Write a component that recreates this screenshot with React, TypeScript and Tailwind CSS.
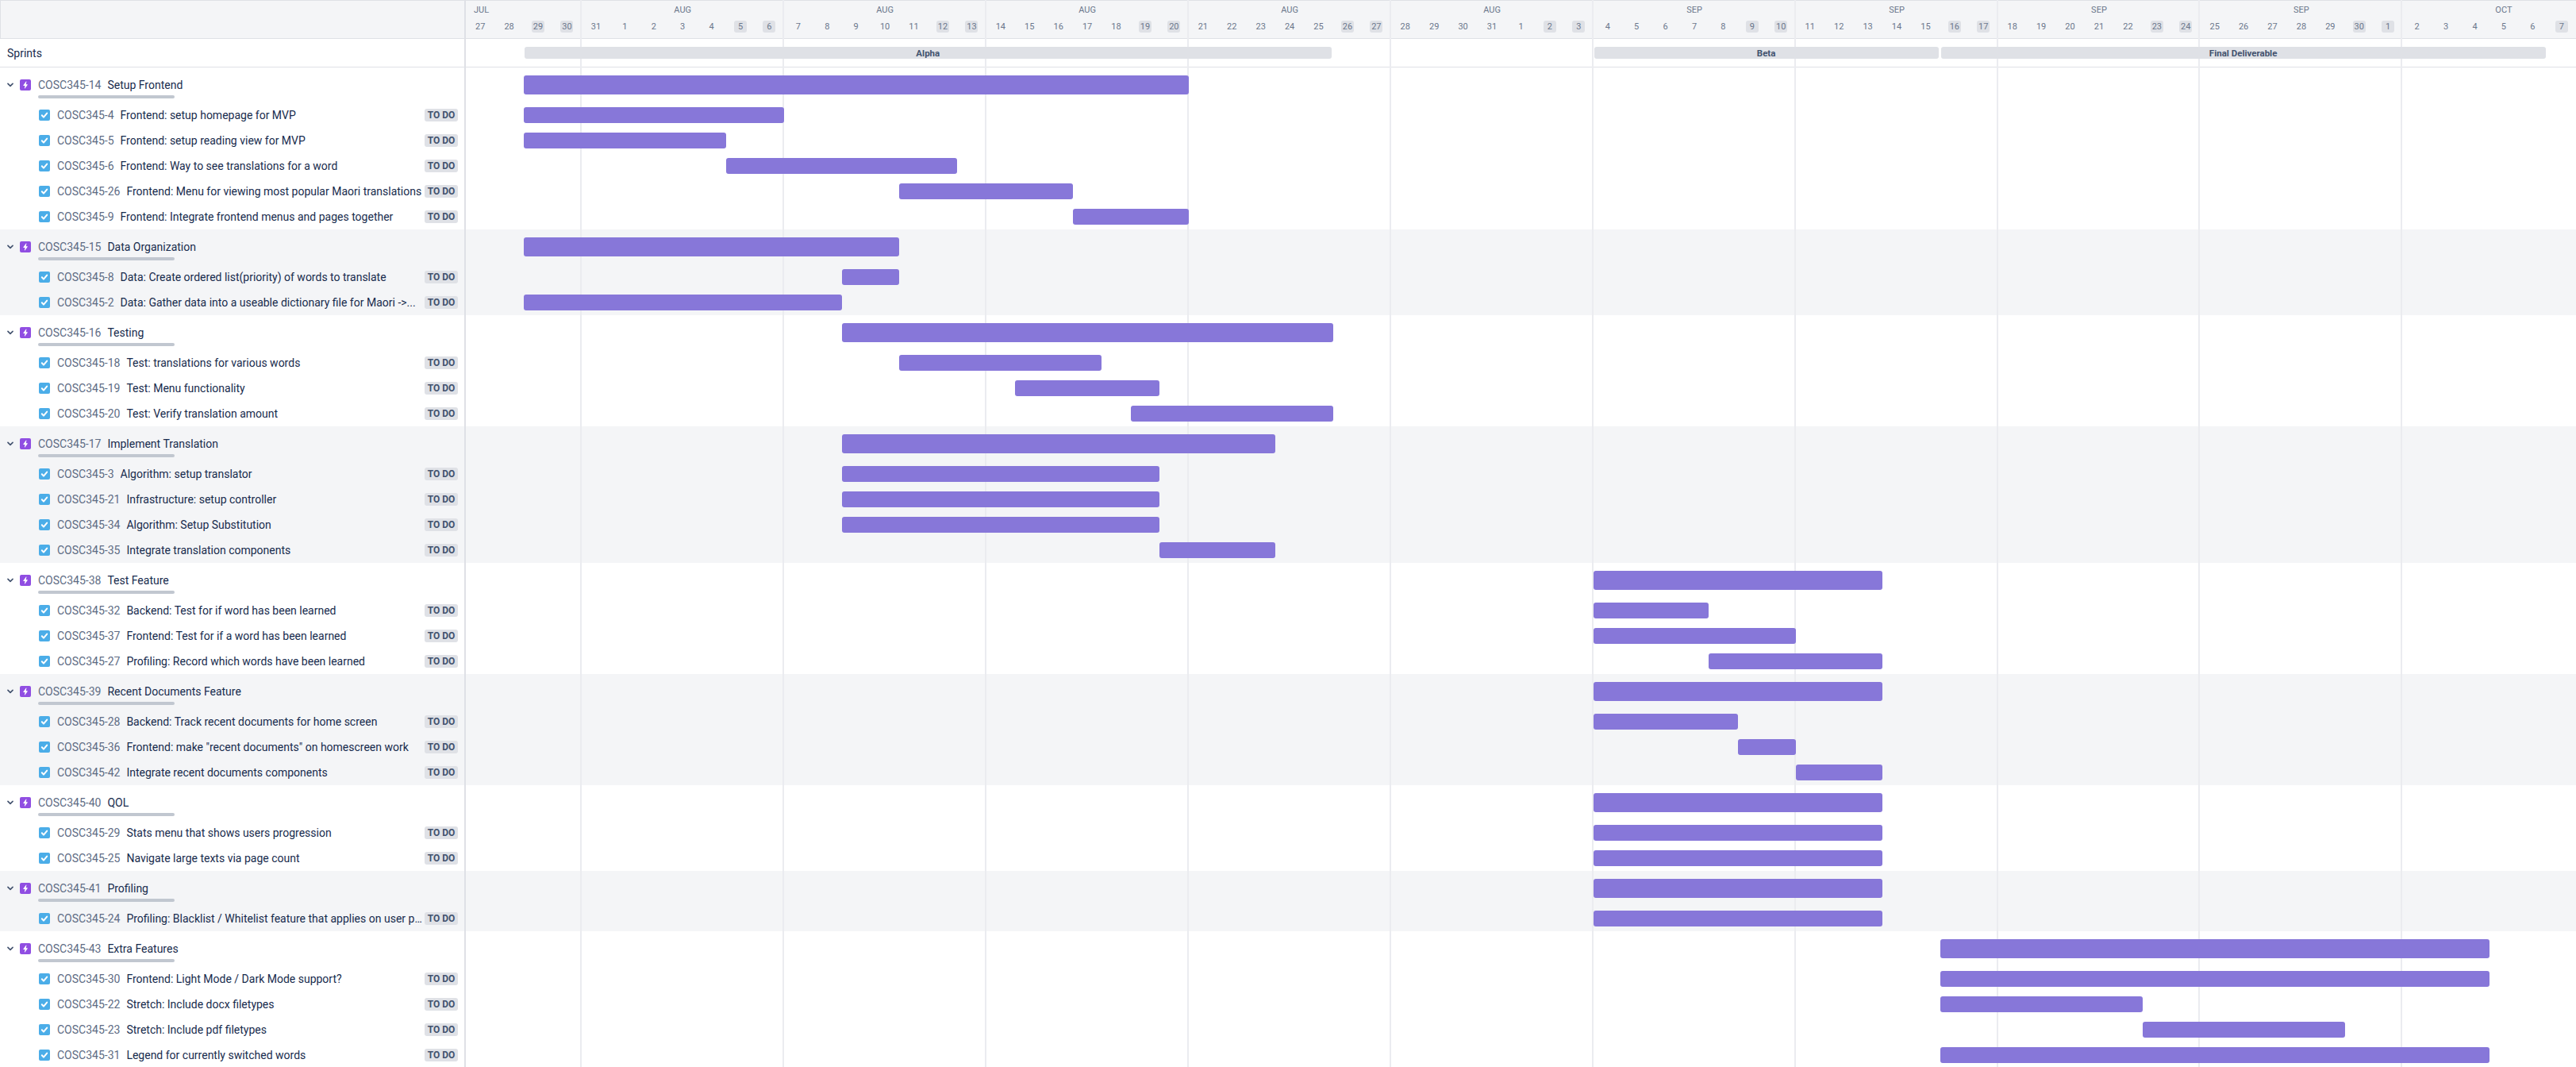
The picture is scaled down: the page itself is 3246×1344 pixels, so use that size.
import React from 'react';

type Issue = { id: string; title: string; start: number; end: number };
type Epic = Issue & { children: Issue[] };

const periods = [
  { label: 'JUL', days: ['27', '28', '29', '30'], weekend: ['29', '30'], align: 'pl-[10px] text-left' },
  { label: 'AUG', days: ['31', '1', '2', '3', '4', '5', '6'], weekend: ['5', '6'], align: 'text-center' },
  { label: 'AUG', days: ['7', '8', '9', '10', '11', '12', '13'], weekend: ['12', '13'], align: 'text-center' },
  { label: 'AUG', days: ['14', '15', '16', '17', '18', '19', '20'], weekend: ['19', '20'], align: 'text-center' },
  { label: 'AUG', days: ['21', '22', '23', '24', '25', '26', '27'], weekend: ['26', '27'], align: 'text-center' },
  { label: 'AUG', days: ['28', '29', '30', '31', '1', '2', '3'], weekend: ['2', '3'], align: 'text-center' },
  { label: 'SEP', days: ['4', '5', '6', '7', '8', '9', '10'], weekend: ['9', '10'], align: 'text-center' },
  { label: 'SEP', days: ['11', '12', '13', '14', '15', '16', '17'], weekend: ['16', '17'], align: 'text-center' },
  { label: 'SEP', days: ['18', '19', '20', '21', '22', '23', '24'], weekend: ['23', '24'], align: 'text-center' },
  { label: 'SEP', days: ['25', '26', '27', '28', '29', '30', '1'], weekend: ['30', '1'], align: 'text-center' },
  { label: 'OCT', days: ['2', '3', '4', '5', '6', '7'], weekend: ['7'], align: 'w-[255px] text-center' },
];

const sprints = [
  { name: 'Alpha', start: 2, end: 30 },
  { name: 'Beta', start: 39, end: 51 },
  { name: 'Final Deliverable', start: 51, end: 72 },
];

const epics: Epic[] = [
  {
    id: 'COSC345-14', title: 'Setup Frontend', start: 2, end: 25,
    children: [
      { id: 'COSC345-4', title: 'Frontend: setup homepage for MVP', start: 2, end: 11 },
      { id: 'COSC345-5', title: 'Frontend: setup reading view for MVP', start: 2, end: 9 },
      { id: 'COSC345-6', title: 'Frontend: Way to see translations for a word', start: 9, end: 17 },
      { id: 'COSC345-26', title: 'Frontend: Menu for viewing most popular Maori translations', start: 15, end: 21 },
      { id: 'COSC345-9', title: 'Frontend: Integrate frontend menus and pages together', start: 21, end: 25 },
    ],
  },
  {
    id: 'COSC345-15', title: 'Data Organization', start: 2, end: 15,
    children: [
      { id: 'COSC345-8', title: 'Data: Create ordered list(priority) of words to translate', start: 13, end: 15 },
      { id: 'COSC345-2', title: 'Data: Gather data into a useable dictionary file for Maori ->...', start: 2, end: 13 },
    ],
  },
  {
    id: 'COSC345-16', title: 'Testing', start: 13, end: 30,
    children: [
      { id: 'COSC345-18', title: 'Test: translations for various words', start: 15, end: 22 },
      { id: 'COSC345-19', title: 'Test: Menu functionality', start: 19, end: 24 },
      { id: 'COSC345-20', title: 'Test: Verify translation amount', start: 23, end: 30 },
    ],
  },
  {
    id: 'COSC345-17', title: 'Implement Translation', start: 13, end: 28,
    children: [
      { id: 'COSC345-3', title: 'Algorithm: setup translator', start: 13, end: 24 },
      { id: 'COSC345-21', title: 'Infrastructure: setup controller', start: 13, end: 24 },
      { id: 'COSC345-34', title: 'Algorithm: Setup Substitution', start: 13, end: 24 },
      { id: 'COSC345-35', title: 'Integrate translation components', start: 24, end: 28 },
    ],
  },
  {
    id: 'COSC345-38', title: 'Test Feature', start: 39, end: 49,
    children: [
      { id: 'COSC345-32', title: 'Backend: Test for if word has been learned', start: 39, end: 43 },
      { id: 'COSC345-37', title: 'Frontend: Test for if a word has been learned', start: 39, end: 46 },
      { id: 'COSC345-27', title: 'Profiling: Record which words have been learned', start: 43, end: 49 },
    ],
  },
  {
    id: 'COSC345-39', title: 'Recent Documents Feature', start: 39, end: 49,
    children: [
      { id: 'COSC345-28', title: 'Backend: Track recent documents for home screen', start: 39, end: 44 },
      { id: 'COSC345-36', title: 'Frontend: make "recent documents" on homescreen work', start: 44, end: 46 },
      { id: 'COSC345-42', title: 'Integrate recent documents components', start: 46, end: 49 },
    ],
  },
  {
    id: 'COSC345-40', title: 'QOL', start: 39, end: 49,
    children: [
      { id: 'COSC345-29', title: 'Stats menu that shows users progression', start: 39, end: 49 },
      { id: 'COSC345-25', title: 'Navigate large texts via page count', start: 39, end: 49 },
    ],
  },
  {
    id: 'COSC345-41', title: 'Profiling', start: 39, end: 49,
    children: [
      { id: 'COSC345-24', title: 'Profiling: Blacklist / Whitelist feature that applies on user p...', start: 39, end: 49 },
    ],
  },
  {
    id: 'COSC345-43', title: 'Extra Features', start: 51, end: 70,
    children: [
      { id: 'COSC345-30', title: 'Frontend: Light Mode / Dark Mode support?', start: 51, end: 70 },
      { id: 'COSC345-22', title: 'Stretch: Include docx filetypes', start: 51, end: 58 },
      { id: 'COSC345-23', title: 'Stretch: Include pdf filetypes', start: 58, end: 65 },
      { id: 'COSC345-31', title: 'Legend for currently switched words', start: 51, end: 70 },
    ],
  },
];

function EpicIcon() {
  return (
    <svg viewBox="0 0 14 14" className="h-[14px] w-[14px] shrink-0">
      <rect width="14" height="14" rx="2" fill="#904EE2" />
      <path d="M7.9 2.6 4.3 7.4c-.1.2 0 .5.3.5h1.9l-.6 3.4c0 .2.3.4.5.2l3.4-4.8c.1-.2 0-.5-.3-.5H7.7l.7-3.4c0-.2-.3-.4-.5-.2Z" fill="#fff" />
    </svg>
  );
}

function TaskIcon() {
  return (
    <svg viewBox="0 0 14 14" className="h-[14px] w-[14px] shrink-0">
      <rect width="14" height="14" rx="2" fill="#4BADE8" />
      <path d="M3.8 7.2 6 9.6 10.2 4.6" fill="none" stroke="#fff" strokeWidth="2" strokeLinecap="round" strokeLinejoin="round" />
    </svg>
  );
}

function Chevron() {
  return (
    <svg viewBox="0 0 10 7" className="h-[6px] w-[8px] shrink-0">
      <path d="M1.2 1.4 5 5.2l3.8-3.8" fill="none" stroke="#42526E" strokeWidth="2" strokeLinecap="round" strokeLinejoin="round" />
    </svg>
  );
}

function TimelineBar({ start, end, height }: { start: number; end: number; height: string }) {
  return (
    <div className="relative z-10 grid h-full min-w-0 flex-1 grid-cols-[repeat(73,minmax(0,1fr))] items-center">
      <div
        className={`${height} rounded-[3px] bg-[#8777D9]`}
        style={{ gridColumn: `${start + 1} / ${end + 1}` }}
      />
    </div>
  );
}

function EpicGroup({ epic, shaded }: { epic: Epic; shaded: boolean }) {
  return (
    <div className={shaded ? 'bg-[#F4F5F7]' : 'bg-white'}>
      <div className="flex h-[44px]">
        <div className="relative flex w-[587px] shrink-0 items-center border-r-2 border-[#DFE1E6] pl-[8px]">
          <div className="flex w-[17px] justify-start pl-px">
            <Chevron />
          </div>
          <EpicIcon />
          <span className="ml-[9px] text-[#5E6C84]">{epic.id}</span>
          <span className="ml-[8px] text-[#172B4D]">{epic.title}</span>
          <div className="absolute bottom-[5px] left-[48px] h-[4px] w-[172px] rounded-full bg-[#C1C7D0]" />
        </div>
        <TimelineBar start={epic.start} end={epic.end} height="h-[24px]" />
      </div>
      {epic.children.map((child) => (
        <div key={child.id} className="flex h-[32px]">
          <div className="flex w-[587px] shrink-0 items-center border-r-2 border-[#DFE1E6] pl-[49px] pr-[8px]">
            <TaskIcon />
            <span className="ml-[9px] shrink-0 text-[#5E6C84]">{child.id}</span>
            <span className="ml-[8px] min-w-0 flex-1 truncate text-[#172B4D]">{child.title}</span>
            <span className="ml-[2px] flex h-[16px] w-[42px] shrink-0 items-center justify-center rounded-[3px] bg-[#DFE1E6] text-[12px] font-bold text-[#42526E]">
              TO DO
            </span>
          </div>
          <TimelineBar start={child.start} end={child.end} height="h-[20px]" />
        </div>
      ))}
    </div>
  );
}

export default function App() {
  return (
    <div className="relative h-[1344px] w-[3246px] overflow-hidden bg-white font-['Roboto',sans-serif] text-[14px] leading-[20px]">
      {/* header */}
      <div className="flex h-[49px] border-y border-[#DFE1E6] bg-[#F4F5F7] border-l">
        <div className="w-[586px] shrink-0 border-r-2 border-[#DFE1E6]" />
        <div className="grid min-w-0 flex-1 grid-cols-[repeat(73,minmax(0,1fr))]">
          {periods.map((p, i) => (
            <div
              key={i}
              className="flex flex-col overflow-hidden"
              style={{ gridColumn: `span ${p.days.length}` }}
            >
              <div className={`${p.align} h-[25px] pt-[2px] text-[11px] leading-[20px] text-[#6B778C]`}>{p.label}</div>
              <div className="flex">
                {p.days.map((d) => (
                  <div key={d} className="flex flex-1 justify-center">
                    <span
                      className={`flex h-[15px] w-[16px] items-center justify-center rounded-[3px] text-[11px] text-[#6B778C] ${
                        p.weekend.includes(d) ? 'bg-[#DFE1E6]' : ''
                      }`}
                    >
                      {d}
                    </span>
                  </div>
                ))}
              </div>
            </div>
          ))}
        </div>
      </div>

      {/* sprints */}
      <div className="flex h-[36px] border-b border-[#DFE1E6]">
        <div className="flex w-[587px] shrink-0 items-center border-r-2 border-[#DFE1E6] pl-[9px] text-[#172B4D]">
          Sprints
        </div>
        <div className="relative z-10 grid min-w-0 flex-1 grid-cols-[repeat(73,minmax(0,1fr))] items-center">
          {sprints.map((s) => (
            <div
              key={s.name}
              className="ml-px mr-[2px] flex h-[15px] items-center justify-center rounded-[3px] bg-[#DFE1E6] text-[11.5px] font-bold text-[#42526E]"
              style={{ gridColumn: `${s.start + 1} / ${s.end + 1}` }}
            >
              {s.name}
            </div>
          ))}
        </div>
      </div>

      {epics.map((epic, i) => (
        <EpicGroup key={epic.id} epic={epic} shaded={i % 2 === 1} />
      ))}

      {/* week lines */}
      <div className="pointer-events-none absolute bottom-0 left-[587px] right-0 top-0 grid grid-cols-[repeat(73,minmax(0,1fr))]">
        {periods.map((p, i) => (
          <div
            key={i}
            className={i < periods.length - 1 ? 'border-r-2 border-[#EBECF0]' : ''}
            style={{ gridColumn: `span ${p.days.length}` }}
          />
        ))}
      </div>
    </div>
  );
}
